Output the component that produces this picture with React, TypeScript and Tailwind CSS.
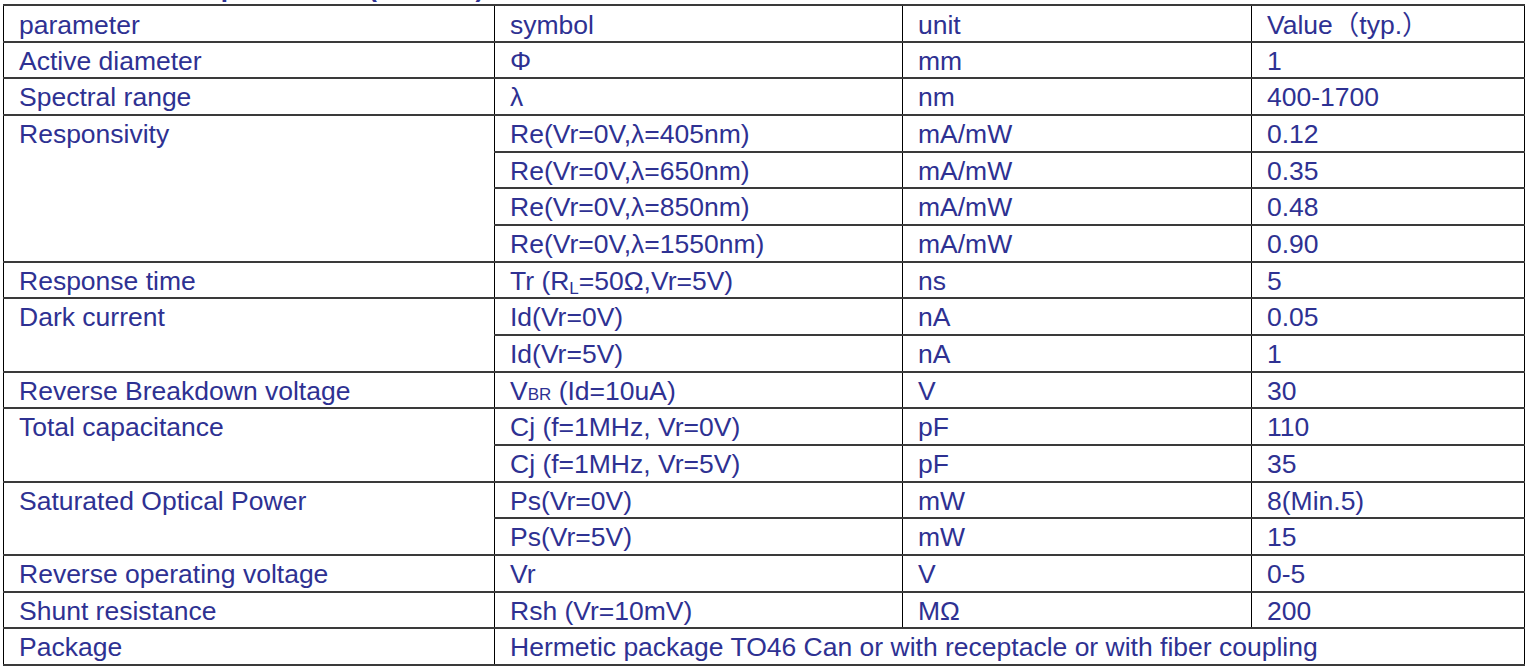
import type { ReactNode } from 'react';

type Sub = { symbol: ReactNode; unit: string; value: string };
type Group = { name: string; rows: Sub[] };

const groups: Group[] = [
    { name: 'Active diameter', rows: [{ symbol: 'Φ', unit: 'mm', value: '1' }] },
    { name: 'Spectral range', rows: [{ symbol: 'λ', unit: 'nm', value: '400-1700' }] },
    {
        name: 'Responsivity',
        rows: [
            { symbol: 'Re(Vr=0V,λ=405nm)', unit: 'mA/mW', value: '0.12' },
            { symbol: 'Re(Vr=0V,λ=650nm)', unit: 'mA/mW', value: '0.35' },
            { symbol: 'Re(Vr=0V,λ=850nm)', unit: 'mA/mW', value: '0.48' },
            { symbol: 'Re(Vr=0V,λ=1550nm)', unit: 'mA/mW', value: '0.90' },
        ],
    },
    {
        name: 'Response time',
        rows: [{ symbol: <>Tr (R<sub className="text-[17px] leading-none">L</sub>=50Ω,Vr=5V)</>, unit: 'ns', value: '5' }],
    },
    {
        name: 'Dark current',
        rows: [
            { symbol: 'Id(Vr=0V)', unit: 'nA', value: '0.05' },
            { symbol: 'Id(Vr=5V)', unit: 'nA', value: '1' },
        ],
    },
    {
        name: 'Reverse Breakdown voltage',
        rows: [{ symbol: <>V<span className="text-[17px] leading-none">BR</span> (Id=10uA)</>, unit: 'V', value: '30' }],
    },
    {
        name: 'Total capacitance',
        rows: [
            { symbol: 'Cj (f=1MHz, Vr=0V)', unit: 'pF', value: '110' },
            { symbol: 'Cj (f=1MHz, Vr=5V)', unit: 'pF', value: '35' },
        ],
    },
    {
        name: 'Saturated Optical Power',
        rows: [
            { symbol: 'Ps(Vr=0V)', unit: 'mW', value: '8(Min.5)' },
            { symbol: 'Ps(Vr=5V)', unit: 'mW', value: '15' },
        ],
    },
    { name: 'Reverse operating voltage', rows: [{ symbol: 'Vr', unit: 'V', value: '0-5' }] },
    { name: 'Shunt resistance', rows: [{ symbol: 'Rsh (Vr=10mV)', unit: 'MΩ', value: '200' }] },
];

const base = 'border-x border-x-black border-y-2 border-y-[#3a3a3a] pl-[15px] pr-2 pb-0 align-top text-left font-normal h-[36.67px]';
const cell = base + ' pt-[3px] leading-[31px]';
const head = base + ' pt-[5px] leading-[29px]';

export default function App() {
    return (
        <div className="bg-white w-[1532px] h-[669px] overflow-hidden text-[#2e3192] text-[26.5px]" style={{ fontFamily: '"Liberation Sans", "Noto Sans CJK SC", Arial, sans-serif' }}>
            <div className="h-[4px] overflow-hidden pl-[20px]">
                <div className="font-bold text-[26px] leading-[30px] -mt-[27px] whitespace-nowrap">2. Photoelectric parameters (Ta=25℃)</div>
            </div>
            <div className="pl-[3px]">
                <table className="border-collapse table-fixed w-[1522px]">
                    <colgroup>
                        <col className="w-[491px]" />
                        <col className="w-[408px]" />
                        <col className="w-[349px]" />
                        <col />
                    </colgroup>
                    <thead>
                        <tr>
                            <th className={head}>parameter</th>
                            <th className={head}>symbol</th>
                            <th className={head}>unit</th>
                            <th className={head}>Value（typ.）</th>
                        </tr>
                    </thead>
                    <tbody>
                        {groups.map((g) =>
                            g.rows.map((r, i) => (
                                <tr key={g.name + i}>
                                    {i === 0 && (
                                        <td className={cell} rowSpan={g.rows.length}>{g.name}</td>
                                    )}
                                    <td className={cell + ' whitespace-nowrap'}>{r.symbol}</td>
                                    <td className={cell}>{r.unit}</td>
                                    <td className={cell}>{r.value}</td>
                                </tr>
                            ))
                        )}
                        <tr>
                            <td className={cell}>Package</td>
                            <td className={cell + ' whitespace-nowrap'} colSpan={3}>Hermetic package TO46 Can or with receptacle or with fiber coupling</td>
                        </tr>
                    </tbody>
                </table>
            </div>
        </div>
    );
}
